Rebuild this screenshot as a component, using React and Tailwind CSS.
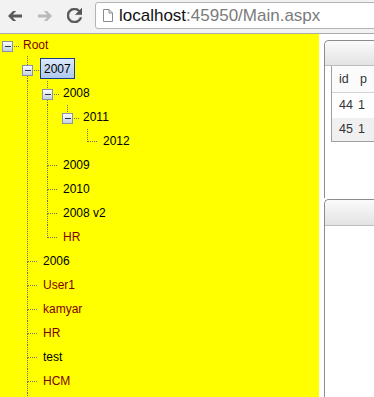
import React from "react";

const DOT = "#707070";

function Cell({ h, through, top, bottom, icon, horiz, iconOff = 1 }) {
  const cy = Math.floor(h / 2);
  const it = cy - 5 + iconOff;
  return (
    <svg width="20" height={h} className="shrink-0 block" shapeRendering="crispEdges">
      <defs>
        <linearGradient id="tvg" x1="0" y1="0" x2="0" y2="1">
          <stop offset="0" stopColor="#ffffff" />
          <stop offset="1" stopColor="#c3cedd" />
        </linearGradient>
      </defs>
      {through && (
        <line x1="7.5" y1="0" x2="7.5" y2={h} stroke={DOT} strokeDasharray="1 1" />
      )}
      {top && (
        <line x1="7.5" y1="0" x2="7.5" y2={icon ? it : cy + 1} stroke={DOT} strokeDasharray="1 1" />
      )}
      {bottom && (
        <line x1="7.5" y1={icon ? it + 11 : cy + 1} x2="7.5" y2={h} stroke={DOT} strokeDasharray="1 1" />
      )}
      {horiz && (
        <line x1="8" y1={cy + 0.5} x2="18" y2={cy + 0.5} stroke={DOT} strokeDasharray="1 1" />
      )}
      {icon && (
        <g>
          <rect x="2.5" y={it + 0.5} width="10" height="10" fill="url(#tvg)" stroke="#8595ab" />
          <rect x="5" y={it + 5} width="6" height="1" fill="#2a3547" />
          <line x1="14" y1={it + 5.5} x2="20" y2={it + 5.5} stroke={DOT} strokeDasharray="1 1" />
        </g>
      )}
    </svg>
  );
}

const M = "text-[#800000]";
const B = "text-black";

const rows = [
  { t: "Root", h: 22, pre: [], own: { icon: true }, c: M },
  { t: "2007", h: 25, pre: [false], own: { icon: true, top: true, bottom: true, iconOff: 2 }, c: B, sel: true },
  { t: "2008", h: 24, pre: [false, true], own: { icon: true, top: true, bottom: true }, c: B },
  { t: "2011", h: 24, pre: [false, true, true], own: { icon: true, top: true }, c: B },
  { t: "2012", h: 24, pre: [false, true, true, false], own: { top: true, horiz: true }, c: B },
  { t: "2009", h: 24, pre: [false, true], own: { top: true, bottom: true, horiz: true }, c: B },
  { t: "2010", h: 24, pre: [false, true], own: { top: true, bottom: true, horiz: true }, c: B },
  { t: "2008 v2", h: 24, pre: [false, true], own: { top: true, bottom: true, horiz: true }, c: B },
  { t: "HR", h: 24, pre: [false, true], own: { top: true, horiz: true }, c: M },
  { t: "2006", h: 24, pre: [false], own: { top: true, bottom: true, horiz: true }, c: B },
  { t: "User1", h: 24, pre: [false], own: { top: true, bottom: true, horiz: true }, c: M },
  { t: "kamyar", h: 24, pre: [false], own: { top: true, bottom: true, horiz: true }, c: M },
  { t: "HR", h: 24, pre: [false], own: { top: true, bottom: true, horiz: true }, c: M },
  { t: "test", h: 24, pre: [false], own: { top: true, bottom: true, horiz: true }, c: B },
  { t: "HCM", h: 24, pre: [false], own: { top: true, bottom: true, horiz: true }, c: M },
];

function TreeRow({ r }) {
  return (
    <div className="flex items-center" style={{ height: r.h }}>
      {r.pre.map((p, i) => (
        <Cell key={i} h={r.h} through={p} />
      ))}
      <Cell h={r.h} {...r.own} />
      {r.sel ? (
        <span className={`h-[21px] flex items-center px-[3px] border border-[#1c3c8c] bg-gradient-to-b from-[#dce9fb] to-[#aec8ee] ${r.c}`}>
          {r.t}
        </span>
      ) : (
        <span className={`pl-[3px] ${r.c}`}>{r.t}</span>
      )}
    </div>
  );
}

function Toolbar() {
  return (
    <div className="h-[34px] bg-[#f2f2f2] border-b border-[#ababab] flex items-start overflow-hidden">
      <svg width="14" height="10" viewBox="0 0 14 10" className="ml-[8px] mt-[11px] shrink-0">
        <path d="M0 5 L5 0 H8.2 L4.7 3.5 H14 V6.5 H4.7 L8.2 10 H5 Z" fill="#595959" />
      </svg>
      <svg width="14" height="10" viewBox="0 0 14 10" className="ml-[16px] mt-[11px] shrink-0">
        <path d="M14 5 L9 0 H5.8 L9.3 3.5 H0 V6.5 H9.3 L5.8 10 H9 Z" fill="#b9b9b9" />
      </svg>
      <svg width="15" height="15" viewBox="4 4 16 16" className="ml-[15px] mt-[8px] shrink-0">
        <path
          d="M17.65 6.35A7.958 7.958 0 0012 4c-4.42 0-7.99 3.58-7.99 8s3.57 8 7.99 8c3.73 0 6.84-2.55 7.73-6h-2.08A5.99 5.99 0 0112 18c-3.31 0-6-2.69-6-6s2.69-6 6-6c1.66 0 3.140.69 4.22 1.78L13 11h7V4l-2.35 2.35z"
          fill="#555555"
          stroke="#555555"
          strokeWidth="0.6"
        />
      </svg>
      <div className="ml-[13px] mt-[2px] h-[27px] w-[320px] shrink-0 bg-white border border-[#b3b3b3] rounded-[3px] flex items-center">
        <svg width="10" height="13" viewBox="0 0 10 13" className="ml-[7px] shrink-0">
          <path d="M0.5 0.5 H6 L9.5 4 V12.5 H0.5 Z M6 0.5 V4 H9.5" fill="white" stroke="#8a8a8a" />
        </svg>
        <span className="ml-[6px] text-[17px] leading-none whitespace-nowrap" style={{ fontFamily: '"Liberation Sans", Arial, sans-serif' }}>
          <span className="text-[#111]">localhost</span>
          <span className="text-[#7b7b7b]">:45950/Main.aspx</span>
        </span>
      </div>
    </div>
  );
}

function Panel({ className, headerH, children }) {
  return (
    <div className={`w-[120px] shrink-0 border-l border-t border-[#8c8c8c] rounded-tl-[5px] flex flex-col ${className}`}>
      <div className="bg-gradient-to-b from-[#fbfbfb] to-[#e3e3e3] border-b border-[#bdbdbd] rounded-tl-[5px]" style={{ height: headerH }} />
      {children}
    </div>
  );
}

export default function App() {
  return (
    <div className="w-[374px] h-[397px] overflow-hidden flex flex-col bg-white" style={{ fontFamily: '"Liberation Sans", Arial, sans-serif' }}>
      <Toolbar />
      <div className="flex flex-1 min-h-0">
        <div className="w-[319px] shrink-0 bg-[#ffff00] text-[12px] leading-none overflow-hidden">
          {rows.map((r, i) => (
            <TreeRow key={i} r={r} />
          ))}
          <div className="flex h-[24px]">
            <Cell h={24} />
            <Cell h={24} through />
          </div>
        </div>
        <div className="flex-1 min-w-0 overflow-hidden pt-[6px] pl-[5px] flex flex-col gap-[1px]">
          <Panel className="h-[158px]" headerH={25}>
            <div className="pl-[6px]">
              <div className="w-[100px] border-l border-b border-[#a0a0a0] text-[12.5px] text-[#333] leading-none">
                <div className="flex items-center h-[27px] bg-[#fbfbfb] border-b border-[#d2d2d2]">
                  <span className="w-[22px] pl-[7px]">id</span>
                  <span className="pl-[6px]">p</span>
                </div>
                <div className="flex items-center h-[25px] bg-white">
                  <span className="w-[22px] pl-[7px]">44</span>
                  <span className="pl-[4px]">1</span>
                </div>
                <div className="flex items-center h-[23px] bg-[#f0f0f0]">
                  <span className="w-[22px] pl-[7px]">45</span>
                  <span className="pl-[4px]">1</span>
                </div>
              </div>
            </div>
          </Panel>
          <Panel className="flex-1" headerH={26} />
        </div>
      </div>
    </div>
  );
}
